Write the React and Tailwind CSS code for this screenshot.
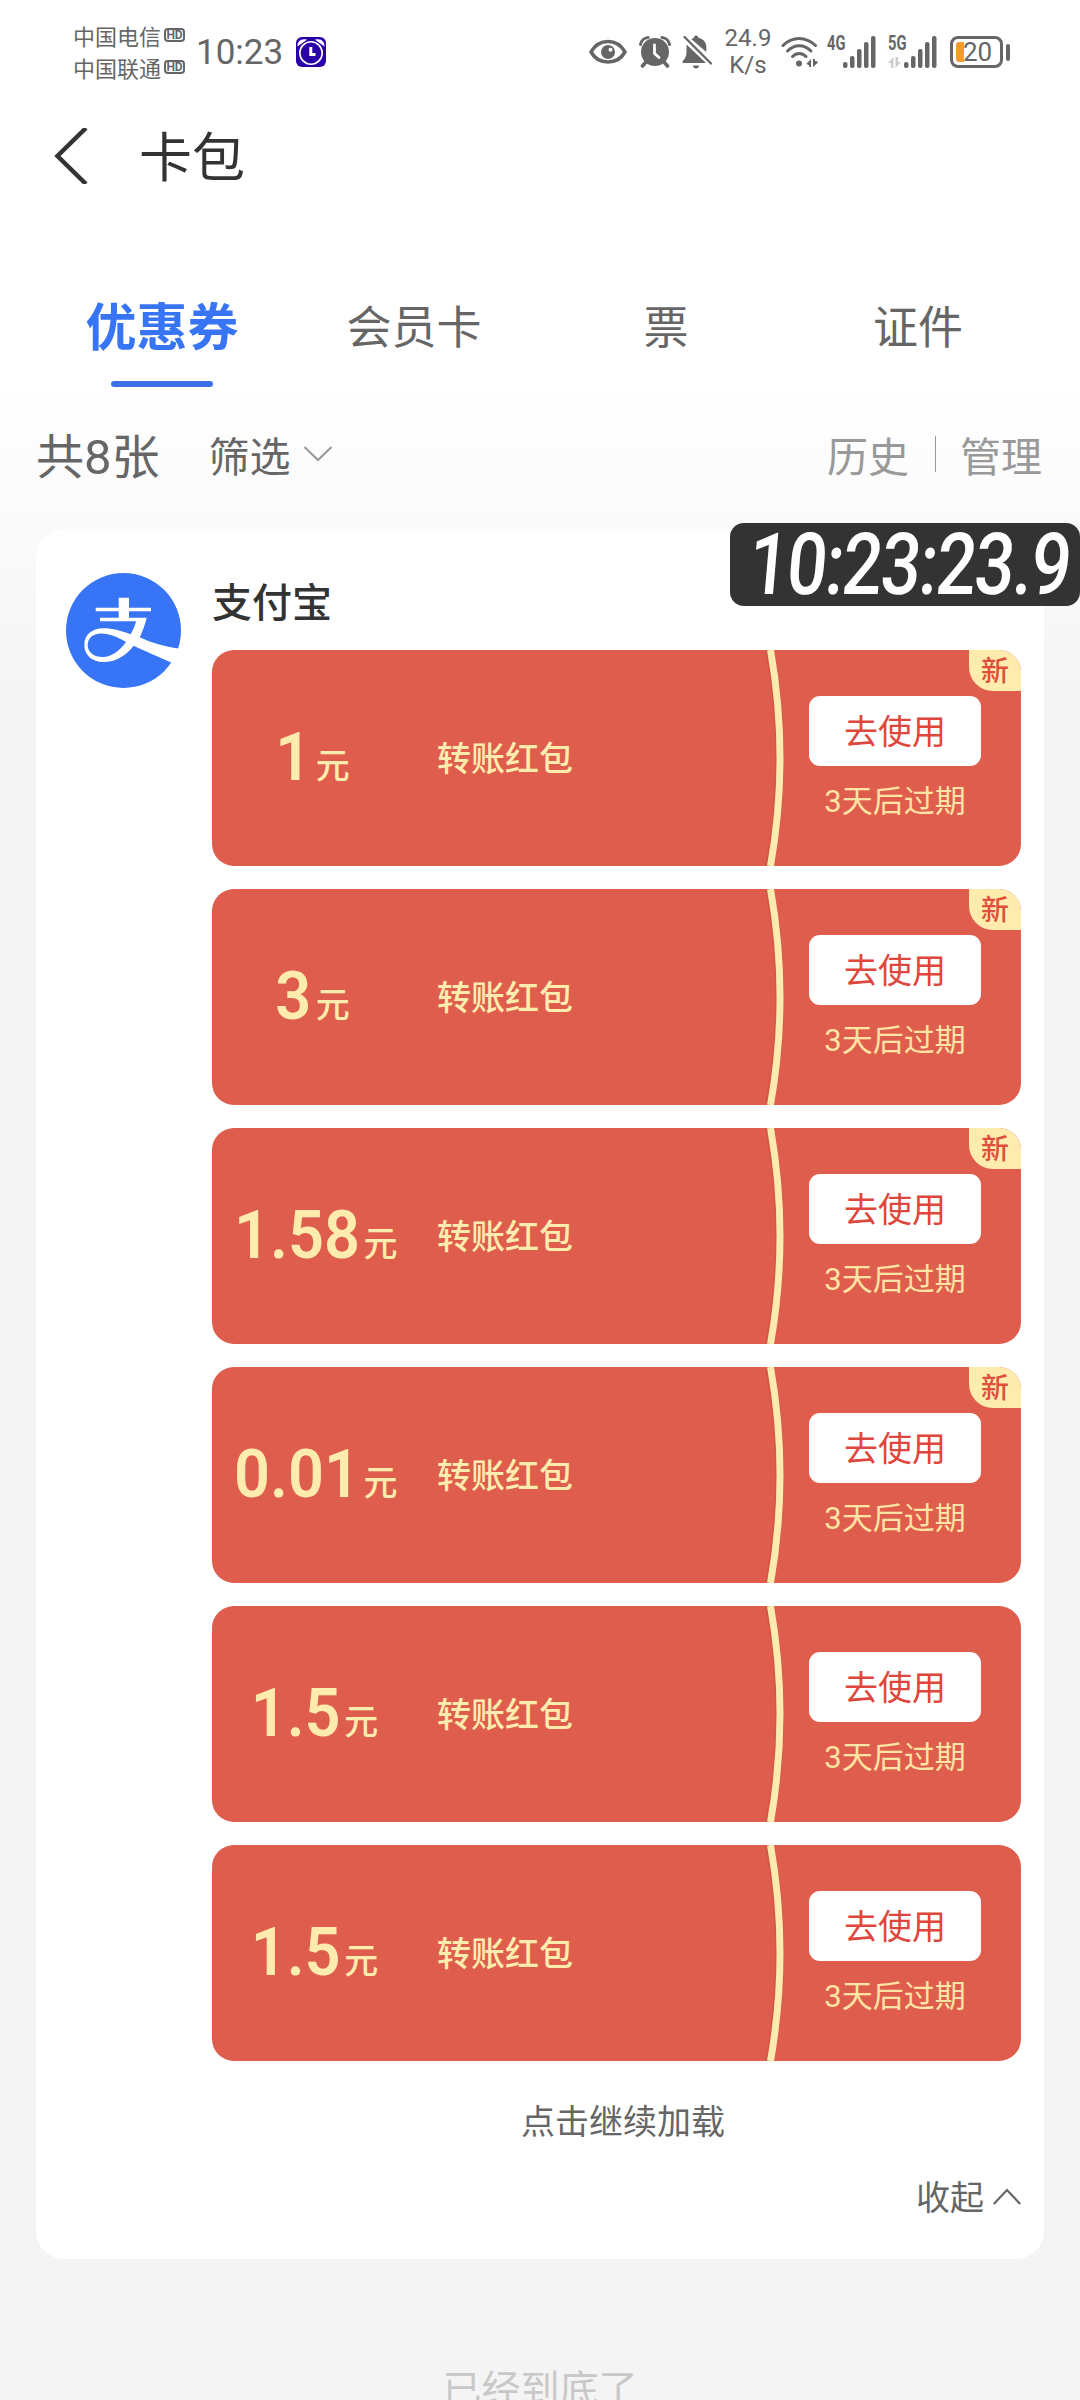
import React, { useState } from 'react'

const TABS = ['优惠券', '会员卡', '票', '证件']

const COUPONS = [
  { id: 1, amount: '1', isNew: true },
  { id: 2, amount: '3', isNew: true },
  { id: 3, amount: '1.58', isNew: true },
  { id: 4, amount: '0.01', isNew: true },
  { id: 5, amount: '1.5', isNew: false },
  { id: 6, amount: '1.5', isNew: false },
]

function HdBadge() {
  return (
    <span className="flex h-[14px] w-[21px] items-center justify-center rounded-[4px] border-2 border-[#666] font-['Roboto'] text-[12px] leading-none font-bold text-[#666]">
      HD
    </span>
  )
}

function ClockAppIcon() {
  return (
    <svg width="30" height="30" viewBox="0 0 30 30">
      <rect width="30" height="30" rx="6" fill="#2a00a6" />
      <path d="M1.500 9.500C1 5 5 1 11 2.800ZM28.500 9.500C29 5 25 1 19 2.800Z" fill="#fff" />
      <circle cx="15" cy="16" r="11.200" fill="#2a00a6" stroke="#fff" strokeWidth="1.600" />
      <path d="M14.800 10v7.500h4.700" fill="none" stroke="#fff" strokeWidth="3" />
    </svg>
  )
}

function EyeIcon() {
  return (
    <svg width="38" height="26" viewBox="0 0 38 26">
      <path d="M2 13C6 6 12 2.500 19 2.500S32 6 36 13C32 20 26 23 19 23S6 20 2 13Z" fill="none" stroke="#666" strokeWidth="3.600" strokeLinejoin="round" />
      <circle cx="19" cy="13" r="7" fill="#666" />
      <circle cx="21.500" cy="10.700" r="2" fill="#fff" />
    </svg>
  )
}

function AlarmIcon() {
  return (
    <svg width="32" height="32" viewBox="0 0 32 32">
      <circle cx="16" cy="16" r="14" fill="#666" />
      <path d="M1.500 8.500C2 5 5 2 9 1.500M30.500 8.500C30 5 27 2 23 1.500" fill="none" stroke="#666" strokeWidth="3" strokeLinecap="round" />
      <path d="M7 26l-3.500 4M25 26l3.500 4" stroke="#666" strokeWidth="3.600" strokeLinecap="round" />
      <path d="M15.500 9v8.500l4.500 4" fill="none" stroke="#fff" strokeWidth="2.800" strokeLinecap="round" strokeLinejoin="round" />
    </svg>
  )
}

function MutedBellIcon() {
  return (
    <svg width="30" height="34" viewBox="0 0 30 34">
      <path d="M14 .5c1.400 0 2.200.8 2.200 2.200C21 3.600 24.300 7 24.300 12v5L9.500 4.200C10.300 3.500 11.200 3 12 2.700 12 1.300 12.700.5 14 .5Z" fill="#666" />
      <path d="M4.500 9.500L24 28H1.500C-.3 28 .5 26 2 24.500 4 22 4.500 20 4.500 16Z" fill="#666" />
      <path d="M11 30.500h6c0 1.700-1.300 3-3 3s-3-1.300-3-3Z" fill="#666" />
      <path d="M2.500 2L29 28.500" stroke="#666" strokeWidth="2.300" strokeLinecap="round" />
    </svg>
  )
}

function WifiIcon() {
  return (
    <svg width="38" height="32" viewBox="0 0 38 32">
      <g fill="none" stroke="#666" strokeWidth="3" strokeLinecap="round">
        <path d="M2 9.500C11 0 25 0 34.500 9.500" />
        <path d="M6.500 15C13.500 8 23 8 30 15" />
        <path d="M11.500 20.500c4-4 9.500-4 13.500 0" />
      </g>
      <circle cx="18" cy="27.500" r="3" fill="#666" />
      <path d="M30 31v-8l-4.500 4.500l1.500 1.500h1v2ZM32 23v8l5-4.500l-1.500-1.500h-1.500v-2Z" fill="#666" />
    </svg>
  )
}

function Signal({ label, data }) {
  return (
    <div className="flex w-[50px] items-end">
      <div className="flex h-8 w-[17px] flex-col justify-between">
        <span className="origin-left scale-x-[0.7] font-['Roboto'] text-[21px] leading-[15px] font-bold text-[#666]">{label}</span>
        {data && (
          <svg width="13" height="11" viewBox="0 0 13 11">
            <path d="M5.500 11V0L0 6h3v5ZM7.500 0v11L13 5H10V0Z" fill="#ccc" />
          </svg>
        )}
      </div>
      <svg className="-ml-px" width="34" height="32" viewBox="0 0 34 32">
        {[[0, 26], [7, 20], [14, 13], [21, 6], [28, 0]].map(([x, y]) => (
          <rect key={x} x={x} y={y} width="4.500" height={32 - y} rx="2" fill="#666" />
        ))}
      </svg>
    </div>
  )
}

function Battery() {
  return (
    <div className="flex items-center gap-[3px]">
      <div className="flex h-8 w-[53px] items-center rounded-[8px] border-[3px] border-[#666] pl-[3px]">
        <span className="h-5 w-[8px] shrink-0 rounded-l-[3px] bg-[#f39c2c]" />
        <span className="-ml-px font-['Roboto'] text-[26px] leading-none text-[#666]">20</span>
      </div>
      <span className="h-[17px] w-1 rounded-[2px] bg-[#666]" />
    </div>
  )
}

function StatusBar() {
  return (
    <div className="flex h-[104px] shrink-0 items-center pr-[70px] pl-[73px]">
      <div className="flex flex-col gap-[10px] pb-[3px]">
        {['中国电信', '中国联通'].map(name => (
          <div key={name} className="flex items-center gap-[3px]">
            <span className="text-[22px] leading-[22px] text-[#666]">{name}</span>
            <HdBadge />
          </div>
        ))}
      </div>
      <span className="ml-[11px] font-['Roboto'] text-[35px] leading-none text-[#666]">10:23</span>
      <div className="ml-[13px]"><ClockAppIcon /></div>
      <div className="ml-auto flex items-center">
        <EyeIcon />
        <div className="ml-[12px]"><AlarmIcon /></div>
        <div className="ml-[11px]"><MutedBellIcon /></div>
        <div className="ml-[13px] flex w-[46px] flex-col items-center font-['Roboto'] text-[24px] leading-[27px] text-[#666]">
          <span>24.9</span>
          <span>K/s</span>
        </div>
        <div className="ml-[10px]"><WifiIcon /></div>
        <div className="ml-[8px]"><Signal label="4G" /></div>
        <div className="ml-[11px]"><Signal label="5G" data /></div>
        <div className="ml-[12px]"><Battery /></div>
      </div>
    </div>
  )
}

function AlipayLogo() {
  return (
    <svg className="shrink-0" width="115" height="115" viewBox="0 0 115 115">
      <circle cx="57.500" cy="57.500" r="57.500" fill="#3875f6" />
      <path d="M52.700 24.700H63V34.700H85v3.600H63v6.400H80.700C79 52 76.500 58.500 73.700 64.300C86 70 98 73.500 112.800 75.500C111.500 81 109.500 85.500 106.500 90C92 83.500 80 78.500 67.700 72.700C60 82.500 50 89 37.300 89C25 89 18.300 81 18.300 72C18.300 62 26 55.300 37 55.300C47 55.300 56 58 64.700 61.300C67 57 69 53 70 48.300H34V44.700H52.700V38.300H29.700V34.700H52.700Z" fill="#fff" />
      <path d="M60 69C52 64.500 44 60.500 35 60.500C26.500 60.500 21.700 65.500 21.700 72C21.700 79.500 28 84 36.500 84C46.500 84 54 77 60 69Z" fill="#3875f6" />
    </svg>
  )
}

function Coupon({ amount, isNew }) {
  return (
    <div className="relative flex h-[216px] items-center overflow-hidden rounded-[22px] bg-[#df5d4d]">
      <div className="flex w-[203px] items-end justify-center gap-[4px] pr-[4px] pb-[2px] text-[#fdecae]">
        <span className="origin-right scale-x-[0.94] font-['Roboto'] text-[67px] leading-[67px] font-semibold">{amount}</span>
        <span className="pb-[10px] text-[34px] leading-[34px] font-medium">元</span>
      </div>
      <span className="w-[339px] pb-[2px] pl-[22px] text-[34px] leading-none font-medium text-[#fdecae]">转账红包</span>
      <svg className="shrink-0" width="40" height="216" viewBox="0 0 40 216">
        <path d="M15.500 0C29 72 29 144 15.500 216" fill="none" stroke="#c9503c" strokeWidth="9" opacity="0.5" />
        <path d="M16.500 0C29.200 72 29.200 144 16.500 216" fill="none" stroke="#fdeaae" strokeWidth="7" />
      </svg>
      <div className="ml-[15px] flex w-[172px] flex-col items-center pb-px">
        <button className="h-[70px] w-full rounded-[11px] bg-white pb-[2px] text-[34px] leading-none text-[#df463c]">去使用</button>
        <span className="mt-[15px] text-[31px] leading-[36px] text-[#fde4a4]">
          <span className="font-['Roboto']">3</span>天后过期
        </span>
      </div>
      {isNew && (
        <span className="absolute top-0 right-0 flex h-[41px] w-[52px] items-center justify-center rounded-bl-[24px] bg-[#fdecae] pb-[3px] text-[28px] leading-none font-medium text-[#df4f3c]">
          新
        </span>
      )}
    </div>
  )
}

// floating clock pinned to the right edge of the screen
function FloatingClock() {
  return (
    <div className="absolute top-[523px] right-0 flex h-[83px] w-[350px] items-center rounded-[14px] bg-[#333] pl-[19px]">
      <span className="origin-left scale-x-[0.82] -skew-x-6 font-['Roboto'] text-[86px] leading-none font-medium tracking-[-2px] text-white">
        10:23:23.9
      </span>
    </div>
  )
}

export default function App() {
  const [tab, setTab] = useState(0)

  return (
    <div className="relative flex h-[2400px] w-[1080px] flex-col overflow-hidden bg-[linear-gradient(#fff_380px,#f4f4f4_720px)] font-['Noto_Sans_CJK_SC',sans-serif]">
      <StatusBar />

      {/* Title */}
      <header className="flex h-[104px] shrink-0 items-center pl-[54px]">
        <svg width="35" height="56" viewBox="0 0 35 56">
          <path d="M32 0L3.500 28L32 56" fill="none" stroke="#333" strokeWidth="4.500" />
        </svg>
        <h1 className="ml-[50px] pb-[4px] text-[53px] leading-[60px] text-[#333]">卡包</h1>
      </header>

      {/* Tabs */}
      <nav className="mt-[86px] grid shrink-0 grid-cols-4 px-9">
        {TABS.map((name, i) => (
          <button key={name} onClick={() => setTab(i)} className="flex flex-col items-center">
            <span className={`h-[60px] leading-[61px] ${tab === i ? 'text-[51px] font-bold text-[#3875f6]' : 'text-[45px] text-[#666]'}`}>{name}</span>
            <span className={`mt-[27px] h-[6px] w-[102px] rounded-full ${tab === i ? 'bg-[#3f6fe8]' : ''}`} />
          </button>
        ))}
      </nav>

      {/* Filter row */}
      <div className="mt-[37px] flex h-[60px] shrink-0 items-center px-9 text-[41px] leading-none">
        <span className="pt-[2px] text-[48px] text-[#666]">
          共<span className="font-['Roboto'] text-[49px]">8</span>张
        </span>
        <span className="ml-[49px] text-[#666]">筛选</span>
        <svg className="ml-[13px]" width="28" height="16" viewBox="0 0 28 16">
          <path d="M.5 1L14 14L27.500 1" fill="none" stroke="#999" strokeWidth="2" />
        </svg>
        <span className="ml-auto text-[#999]">历史</span>
        <span className="mr-[24px] ml-[26px] h-[36px] w-px bg-[#999]" />
        <span className="mr-[2px] text-[#999]">管理</span>
      </div>

      {/* Coupon group */}
      <section className="mx-9 mt-[45px] flex shrink-0 gap-[31px] rounded-[28px] bg-white pt-[44px] pr-[23px] pb-[43px] pl-[30px]">
        <AlipayLogo />
        <div className="flex flex-1 flex-col pt-[5px]">
          <h2 className="mb-[28px] text-[40px] leading-[44px] font-medium text-[#333]">支付宝</h2>
          <div className="flex flex-col gap-[23px]">
            {COUPONS.map(c => <Coupon key={c.id} amount={c.amount} isNew={c.isNew} />)}
          </div>
          <div className="mt-[39px] pl-[13px] text-center text-[34px] leading-[40px] text-[#666]">点击继续加载</div>
          <div className="mt-[36px] flex items-center justify-end text-[34px] leading-[40px] text-[#666]">
            收起
            <svg className="ml-[9px]" width="28" height="17" viewBox="0 0 28 17">
              <path d="M.8 16L14 2L27.200 16" fill="none" stroke="#666" strokeWidth="2.200" />
            </svg>
          </div>
        </div>
      </section>

      <div className="mt-[107px] shrink-0 text-center text-[39px] leading-[40px] text-[#c8c8c8]">已经到底了</div>

      <FloatingClock />
    </div>
  )
}
